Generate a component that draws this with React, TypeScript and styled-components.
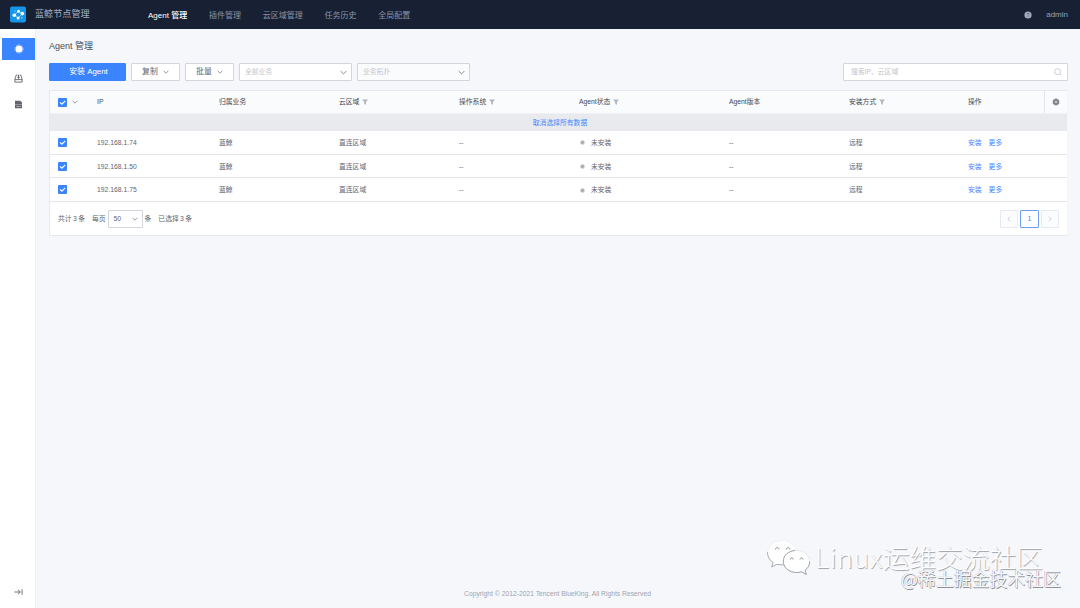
import React from 'react';
import styled, { createGlobalStyle, css } from 'styled-components';

const Global = createGlobalStyle`
  * { box-sizing: border-box; }
  body { margin: 0; background: #f5f7fa; font-family: "Liberation Sans", "Noto Sans CJK SC", sans-serif; color: #63656e; }
`;

const Page = styled.div`
  position: relative;
  display: flex;
  flex-direction: column;
  width: 1080px;
  height: 608px;
  overflow: hidden;
  background: #f5f7fb;
  font-size: 6.8px;
  line-height: 12px;
  white-space: nowrap;
`;

const Header = styled.header`
  display: flex;
  align-items: center;
  height: 29px;
  flex: none;
  padding: 0 12px 0 10px;
  background: #182133;
  color: #96a2b9;
  font-size: 8px;
`;
const Brand = styled.div`
  display: flex;
  align-items: center;
  gap: 8px;
  width: 138px;
  padding-bottom: 1px;
  font-size: 9.1px;
  color: #a5b0c6;
`;
const Nav = styled.nav`
  display: flex;
  flex: 1;
  gap: 21.8px;
  padding-top: 2px;
`;
const NavItem = styled.a<{ $active?: boolean }>`
  color: ${p => (p.$active ? '#fff' : '#8793ab')};
  font-weight: ${p => (p.$active ? 500 : 400)};
`;
const Account = styled.div`
  display: flex;
  align-items: center;
  gap: 14px;
  padding-top: 1px;
`;

const Body = styled.div`
  display: flex;
  flex: 1;
  min-height: 0;
`;
const Sidebar = styled.aside`
  display: flex;
  flex-direction: column;
  width: 35px;
  padding: 9px 0 9px 2px;
  background: #fff;
  box-shadow: 1px 0 0 #edeff3;
`;
const SideItem = styled.div<{ $active?: boolean; $h: number }>`
  display: flex;
  align-items: center;
  justify-content: center;
  height: ${p => p.$h}px;
  background: ${p => (p.$active ? '#3a84ff' : 'transparent')};
  color: ${p => (p.$active ? '#fff' : '#63656e')};
`;
const Spacer = styled.div`
  flex: 1;
`;
const Main = styled.main`
  display: flex;
  flex-direction: column;
  flex: 1;
  padding: 11px 12px 8px 14px;
`;
const Title = styled.h1`
  margin: 0;
  height: 12px;
  font-size: 9px;
  line-height: 12px;
  font-weight: 400;
  color: #4a4c55;
`;
const Toolbar = styled.div`
  display: flex;
  height: 18px;
  margin: 11px 0 9px;
`;
const control = css`
  display: flex;
  align-items: center;
  height: 18px;
  border: 1px solid #d2d5dc;
  border-radius: 1px;
  background: #fff;
`;
const Button = styled.button<{ $primary?: boolean }>`
  ${control}
  justify-content: center;
  gap: 5px;
  padding: 0;
  width: ${p => (p.$primary ? 77 : 49)}px;
  margin-right: 5px;
  font: 7.9px/12px "Liberation Sans", "Noto Sans CJK SC", sans-serif;
  color: #63656e;
  ${p => p.$primary && css`
    background: #3a84ff;
    border-color: #3a84ff;
    color: #fff;
    padding-left: 2px;
  `}
`;
const Select = styled.div<{ $disabled?: boolean }>`
  ${control}
  justify-content: space-between;
  width: 113px;
  margin-right: 5px;
  padding: 0 4px 0 5px;
  color: #c4c6cc;
  background: ${p => (p.$disabled ? '#fafbfd' : '#fff')};
`;
const Search = styled.div`
  ${control}
  justify-content: space-between;
  width: 225px;
  margin-left: auto;
  padding: 0 5px 0 7px;
  color: #bfc2ca;
`;

const Panel = styled.section`
  height: 146px;
  border: 1px solid #e6e9ee;
  border-right-color: #f3f5f8;
  background: #fff;
`;
const Row = styled.div<{ $head?: boolean }>`
  display: grid;
  grid-template-columns: 47px 122px 120px 120px 120px 150px 120px 119px 76px 1fr;
  align-items: center;
  height: ${p => (p.$head ? 23.4 : 23.7)}px;
  border-bottom: 1px solid ${p => (p.$head ? '#f0f1f5' : '#e3e5ea')};
  background: ${p => (p.$head ? '#fafbfd' : '#fff')};
  color: ${p => (p.$head ? '#46484f' : '#63656e')};
`;
const Cell = styled.div<{ $gap?: number }>`
  display: flex;
  align-items: center;
  gap: ${p => p.$gap ?? 2}px;
  padding-top: 1px;
`;
const HeadCell = styled(Cell)`
  padding-top: 0;
`;
const CheckCell = styled(Cell)`
  padding: 0 0 0 8px;
`;
const ToolCell = styled(Cell)`
  height: 100%;
  padding: 0 1px 0 0;
  justify-content: center;
  border-left: 1px solid #e3e5ea;
`;
const Notice = styled.div`
  height: 16.6px;
  padding: 3px 0 0 3px;
  background: #e9eaed;
  color: #4686ff;
  text-align: center;
`;
const Link = styled.a`
  color: #4686ff;
`;
const Dot = styled.span`
  width: 5px;
  height: 5px;
  margin-left: 1px;
  border: 1px solid #d9dae0;
  border-radius: 50%;
  background: #a5a7ae;
`;
const Footer = styled.div`
  display: flex;
  align-items: center;
  height: 33px;
  padding: 0 8px;
`;
const PageSize = styled.div`
  ${control}
  justify-content: space-between;
  width: 35px;
  margin: 0 2px;
  padding: 0 4px 0 5px;
`;
const Label = styled.span<{ $mr?: number }>`
  margin-right: ${p => p.$mr ?? 0}px;
  word-spacing: -0.5px;
`;
const Pager = styled.div`
  display: flex;
  gap: 2px;
  margin-left: auto;
`;
const PageButton = styled.span<{ $active?: boolean }>`
  ${control}
  justify-content: center;
  width: ${p => (p.$active ? 19 : 18)}px;
  border-color: ${p => (p.$active ? '#699df8' : '#e7e9ef')};
  color: ${p => (p.$active ? '#3a84ff' : '#c4c6cc')};
  background: ${p => (p.$active ? '#fff' : '#fbfcfd')};
`;
const Copyright = styled.footer`
  margin-top: auto;
  padding-right: 2px;
  text-align: center;
  font-size: 6.75px;
  color: #a2a5ad;
`;

const Watermark = styled.div<{ $x: number; $y: number; $size: number }>`
  position: absolute;
  left: ${p => p.$x}px;
  top: ${p => p.$y}px;
  font: 300 ${p => p.$size}px/1.2 "Noto Sans CJK SC", sans-serif;
  color: #fff;
  text-shadow: 0.8px 0.8px 0.8px #a0a2a6;
`;
const Latin = styled.span`
  letter-spacing: 0.65px;
`;
const Credit = styled(Watermark)`
  font-weight: 400;
  color: #f5f7fa;
  text-shadow: 0.7px 0.7px 0.3px #8d9095, -0.4px -0.4px 0.3px #b4b6bb;
`;
const Bubbles = styled.svg`
  position: absolute;
  left: 766px;
  top: 538px;
`;

const Chevron = ({ size = 6, color = '#878992', turn = 0 }: { size?: number; color?: string; turn?: number }) => (
  <svg width={size} height={size} viewBox="0 0 6 6" fill="none" stroke={color} strokeWidth=".85">
    <path d="M.6 1.8 3 4.2 5.4 1.8" transform={`rotate(${turn} 3 3)`} />
  </svg>
);
const Check = () => (
  <svg width="9" height="9" viewBox="0 0 9 9">
    <rect width="9" height="9" rx="1" fill="#3a84ff" />
    <path d="m2 4.4 1.9 1.8L7.2 2.8" fill="none" stroke="#fff" strokeWidth="1.2" />
  </svg>
);
const Filter = () => (
  <svg width="6" height="6" viewBox="0 0 6 6">
    <path d="M0 .4h6L4 3v2.800L2.200 5V3z" fill="#b4b6be" />
  </svg>
);
const Gear = () => (
  <svg width="8" height="8" viewBox="0 0 8 8">
    <path d="M4 .6 7 2.300v3.400L4 7.400 1 5.700V2.300z" fill="#85878f" stroke="#85878f" strokeWidth=".5" strokeLinejoin="round" />
    <circle cx="4" cy="4" r="1.1" fill="#d3d4d9" />
  </svg>
);
const Logo = () => (
  <svg width="17" height="17" viewBox="0 0 17 17">
    <rect y=".5" width="16" height="16" rx="2" fill="#1595e8" />
    <path d="M4.300 8.900 8.300 5.400M8 12l4.300-4M8.300 5.400 12.200 8M4.300 8.900 8 12" stroke="#9ad6fb" strokeWidth=".8" />
    <g fill="#fff">
      <circle cx="8.500" cy="5.200" r="1.500" />
      <circle cx="4.300" cy="9.200" r="1.800" />
      <circle cx="12.300" cy="7.600" r="1.800" />
      <circle cx="8.100" cy="12" r="1.500" />
    </g>
    <circle cx="5" cy="5" r=".7" fill="#7cccff" />
    <circle cx="11.800" cy="11.800" r=".8" fill="#7cccff" />
  </svg>
);
const Help = () => (
  <svg width="8" height="8" viewBox="0 0 8 8">
    <circle cx="4" cy="4" r="3.6" fill="#a1abbe" />
    <path d="M2.900 3.100c.1-1.300 2.200-1.200 2.200 0 0 .7-1 .7-1.100 1.500M4 5.400v.8" fill="none" stroke="#4a5469" strokeWidth=".7" />
  </svg>
);
const AgentIcon = () => (
  <svg width="10" height="10" viewBox="0 0 10 10">
    <circle cx="5" cy="5" r="3.500" fill="#fff" />
    <circle cx="5" cy="5" r="4.100" fill="none" stroke="#b9d3ff" strokeWidth=".9" strokeDasharray="1.600 1" />
  </svg>
);
const PluginIcon = () => (
  <svg width="9" height="9" viewBox="0 0 9 9" fill="none" stroke="currentColor" strokeWidth=".9">
    <path d="M3.300 1H2.200L.9 5.200v2.900h7.200V5.200L6.800 1H5.700" strokeLinejoin="round" />
    <path d="M.9 5.600h7.200" />
    <path d="M3.900.8h1.200v2.400h1L4.500 4.900 2.900 3.200h1z" fill="currentColor" stroke="none" />
  </svg>
);
const LogIcon = () => (
  <svg width="9" height="9" viewBox="0 0 9 9">
    <path d="M1 .8h5.200L8 2.600v5.600H1z" fill="currentColor" />
    <path d="M1 4.500h7" stroke="#c9cad0" strokeWidth=".5" />
    <path d="M2.200 6.500h4.600" stroke="#d3d4d9" strokeWidth=".6" />
  </svg>
);
const ExpandIcon = () => (
  <svg width="9" height="8" viewBox="0 0 9 8" fill="none" stroke="currentColor" strokeWidth=".9">
    <path d="M.5 4h5.800M4 1.800 6.300 4 4 6.200M8.100 1.200v5.600" />
  </svg>
);
const SearchIcon = () => (
  <svg width="8" height="8" viewBox="0 0 8 8" fill="none" stroke="#bfc2ca" strokeWidth=".8">
    <circle cx="3.700" cy="3.700" r="3" />
    <path d="m6 6 1.600 1.600" />
  </svg>
);

const columns: [string, boolean][] = [
  ['IP', false], ['归属业务', false], ['云区域', true], ['操作系统', true],
  ['Agent状态', true], ['Agent版本', false], ['安装方式', true], ['操作', false],
];
const hosts = ['192.168.1.74', '192.168.1.50', '192.168.1.75'];

export default function App() {
  return (
    <Page>
      <Global />
      <Header>
        <Brand><Logo />蓝鲸节点管理</Brand>
        <Nav>
          <NavItem $active>Agent 管理</NavItem>
          <NavItem>插件管理</NavItem>
          <NavItem>云区域管理</NavItem>
          <NavItem>任务历史</NavItem>
          <NavItem>全局配置</NavItem>
        </Nav>
        <Account><Help />admin</Account>
      </Header>
      <Body>
        <Sidebar>
          <SideItem $active $h={22}><AgentIcon /></SideItem>
          <SideItem $h={36}><PluginIcon /></SideItem>
          <SideItem $h={16}><LogIcon /></SideItem>
          <Spacer />
          <SideItem $h={14}><ExpandIcon /></SideItem>
        </Sidebar>
        <Main>
          <Title>Agent 管理</Title>
          <Toolbar>
            <Button $primary>安装 Agent</Button>
            <Button>复制<Chevron /></Button>
            <Button>批量<Chevron /></Button>
            <Select>全部业务<Chevron size={7} /></Select>
            <Select $disabled>业务拓扑<Chevron size={7} /></Select>
            <Search>搜索IP、云区域<SearchIcon /></Search>
          </Toolbar>
          <Panel>
            <Row $head>
              <CheckCell $gap={5}><Check /><Chevron /></CheckCell>
              {columns.map(([name, filter]) => (
                <HeadCell key={name} $gap={3}>{name}{filter && <Filter />}</HeadCell>
              ))}
              <ToolCell><Gear /></ToolCell>
            </Row>
            <Notice>取消选择所有数据</Notice>
            {hosts.map(ip => (
              <Row key={ip}>
                <CheckCell><Check /></CheckCell>
                <Cell>{ip}</Cell>
                <Cell>蓝鲸</Cell>
                <Cell>直连区域</Cell>
                <Cell>--</Cell>
                <Cell $gap={6}><Dot />未安装</Cell>
                <Cell>--</Cell>
                <Cell>远程</Cell>
                <Cell $gap={7}><Link>安装</Link><Link>更多</Link></Cell>
              </Row>
            ))}
            <Footer>
              <Label $mr={7}>共计 3 条</Label>
              <Label>每页</Label>
              <PageSize>50<Chevron /></PageSize>
              <Label $mr={7}>条</Label>
              <Label>已选择 3 条</Label>
              <Pager>
                <PageButton><Chevron turn={90} color="#c4c6cc" /></PageButton>
                <PageButton $active>1</PageButton>
                <PageButton><Chevron turn={-90} color="#c4c6cc" /></PageButton>
              </Pager>
            </Footer>
          </Panel>
          <Copyright>Copyright © 2012-2021 Tencent BlueKing. All Rights Reserved</Copyright>
        </Main>
      </Body>
      <Bubbles width="46" height="40" viewBox="0 0 46 40" fill="#fff" strokeWidth=".9">
        <path d="M16 2.500C8 2.500 1.500 8 1.500 15c0 4 2.200 7.400 5.600 9.700L5.700 29l5-2.600c2 .6 4 .8 6.300.8 7.700-.4 13.700-5.700 13.700-12.300C30.500 8 24 2.500 16 2.500z" stroke="#eceef1" />
        <path d="M1.500 14c0 5 2.200 8.400 5.600 10.700L5.700 29l5-2.600 7 .5" fill="none" stroke="#a5a7ac" />
        <path d="M30.500 12.500c-7.300 0-13.200 4.800-13.200 11s5.900 11 13.200 11c1.700 0 3.400-.2 4.900-.7l5 2.700-1.400-4.200c3-2 4.700-5.200 4.700-8.800 0-6.200-5.900-11-13.200-11z" stroke="#e3e5e8" />
        <path d="M29 12.500c-6.800.5-11.700 5.100-11.700 11 0 6.200 5.900 11 13.200 11 1.700 0 3.400-.2 4.900-.7l5 2.700-1.400-4.200c3-2 4.700-5.200 4.700-8.800" fill="none" stroke="#999ba0" />
        <g fill="none" stroke="#8d9095" strokeWidth="1">
          <path d="M9.500 11.500c.3-2.700 3.200-2.700 3.500 0M20.500 11.500c.3-2.700 3.200-2.700 3.500 0M24.300 21.500c.3-2.300 2.700-2.300 3 0M34 21.500c.3-2.300 2.700-2.300 3 0" />
        </g>
      </Bubbles>
      <Watermark $x={815} $y={541} $size={26.7}><Latin>Linux</Latin>运维交流社区</Watermark>
      <Credit $x={901} $y={568} $size={17.9}>@稀土掘金技术社区</Credit>
    </Page>
  );
}
